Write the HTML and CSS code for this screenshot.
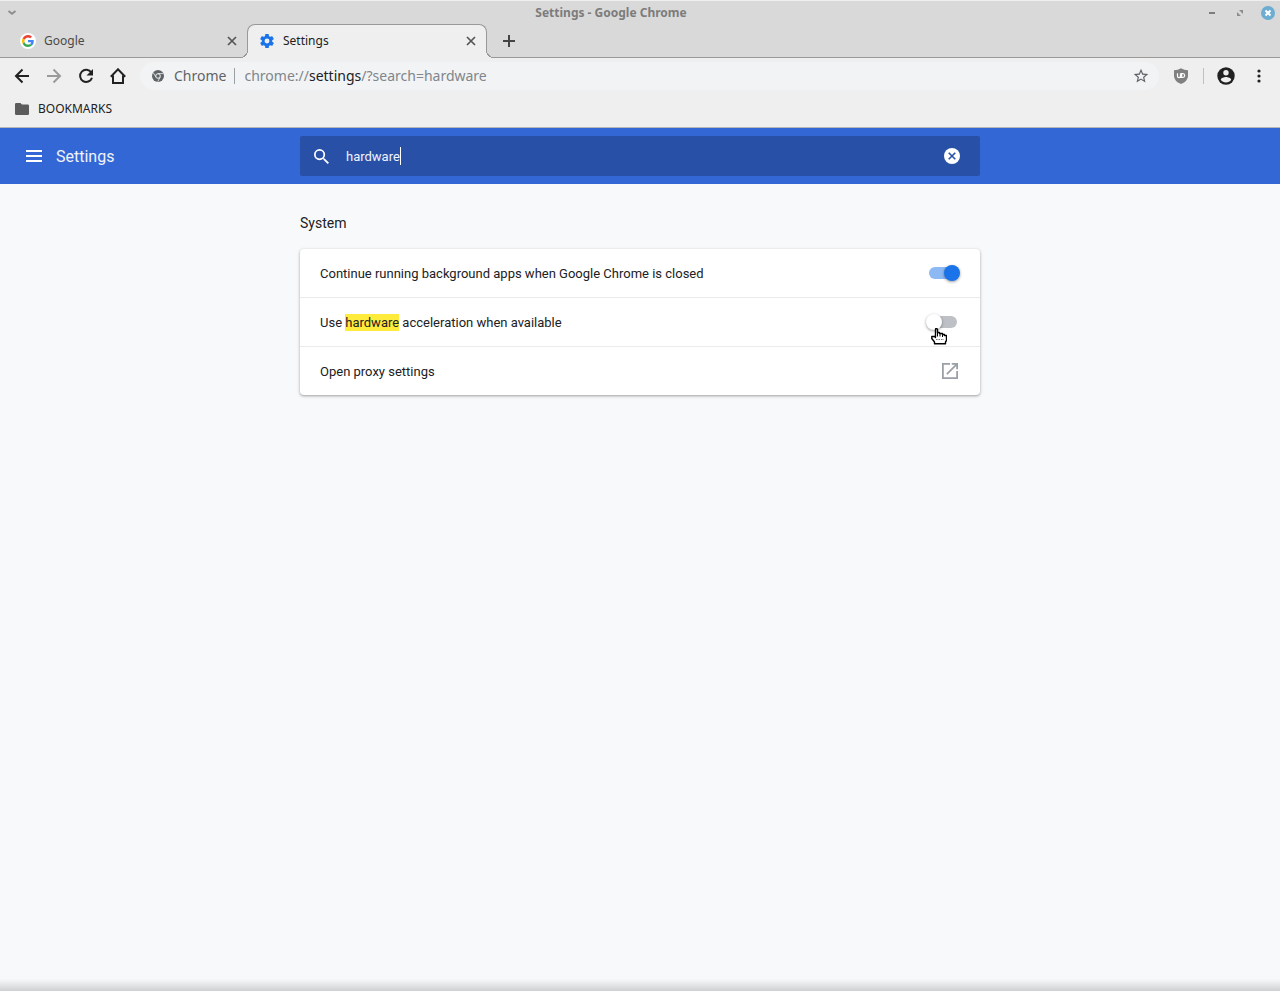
FILE: index.html
```
<!DOCTYPE html>
<html lang="en">
<head>
<meta charset="utf-8">
<title>Settings - Google Chrome</title>
<link rel="stylesheet" href="styles.css">
</head>
<body>
<div class="window">
  <header class="titlebar">
    <button class="win-btn" aria-label="Window menu"><svg width="10" height="10" viewBox="0 0 10 10"><path d="M1.500 3L5 5.800 8.500 3" fill="none" stroke="#8c8c8c" stroke-width="1.800"/></svg></button>
    <div class="window-title">Settings - Google Chrome</div>
    <div class="window-controls">
      <button class="win-btn" aria-label="Minimize"><svg width="14" height="14" viewBox="0 0 14 14"><path d="M4 7h6" stroke="#7d7d7d" stroke-width="2"/></svg></button>
      <button class="win-btn" aria-label="Restore"><svg width="14" height="14" viewBox="0 0 14 14"><path d="M6 4h4v4zM4 6v4h4z" fill="#8c8c8c"/></svg></button>
      <button class="win-btn" aria-label="Close"><svg width="14" height="14" viewBox="0 0 14 14"><circle cx="7" cy="7" r="7" fill="#6cadd1"/><path d="M4.500 4.500l5 5M9.500 4.500l-5 5" stroke="#fff" stroke-width="2"/></svg></button>
    </div>
  </header>

  <nav class="tabs" aria-label="Tabs">
    <div class="tab">
      <svg width="16" height="16" viewBox="0 0 16 16"><circle cx="8" cy="8" r="8" fill="#fff"/><g transform="translate(2 2) scale(.25)"><path fill="#EA4335" d="M24 9.500c3.540 0 6.710 1.220 9.210 3.600l6.850-6.850C35.900 2.380 30.470 0 24 0 14.620 0 6.510 5.380 2.560 13.220l7.980 6.190C12.430 13.720 17.740 9.500 24 9.500z"/><path fill="#4285F4" d="M46.980 24.550c0-1.570-.15-3.090-.38-4.550H24v9.020h12.940c-.58 2.960-2.260 5.480-4.780 7.180l7.730 6c4.510-4.180 7.090-10.360 7.090-17.650z"/><path fill="#FBBC05" d="M10.530 28.590c-.48-1.450-.76-2.990-.76-4.590s.27-3.140.76-4.590l-7.980-6.190C.92 16.460 0 20.120 0 24s.92 7.540 2.560 10.780z"/><path fill="#34A853" d="M24 48c6.480 0 11.930-2.130 15.890-5.810l-7.730-6c-2.150 1.450-4.920 2.300-8.160 2.300-6.260 0-11.570-4.220-13.470-9.910l-7.980 6.190C6.510 42.620 14.620 48 24 48z"/></g></svg>
      <a class="tab-title" href="#google">Google</a>
      <button class="tab-close" aria-label="Close Google tab"><svg width="10" height="10" viewBox="0 0 10 10"><path d="M1 1l8 8M9 1L1 9" stroke="#555" stroke-width="1.700"/></svg></button>
    </div>
    <div class="tab tab-active">
      <svg width="16" height="16" viewBox="0.500 0.500 23 23"><path fill="#1a73e8" d="M19.430 12.980c.04-.32.07-.64.07-.98s-.03-.66-.07-.98l2.110-1.650c.19-.15.24-.42.12-.64l-2-3.460c-.12-.22-.39-.3-.61-.22l-2.490 1c-.52-.4-1.080-.73-1.690-.98l-.38-2.650A.49.49 0 0 0 14 2h-4c-.25 0-.46.18-.49.42l-.38 2.650c-.61.25-1.170.59-1.690.98l-2.490-1c-.23-.09-.49 0-.61.22l-2 3.460c-.13.22-.07.49.12.64l2.110 1.650c-.04.32-.07.65-.07.98s.03.66.07.98l-2.110 1.650c-.19.15-.24.42-.12.64l2 3.460c.12.22.39.3.61.22l2.490-1c.52.4 1.080.73 1.690.98l.38 2.650c.03.24.24.42.49.42h4c.25 0 .46-.18.49-.42l.38-2.650c.61-.25 1.170-.59 1.690-.98l2.490 1c.23.09.49 0 .61-.22l2-3.460c.12-.22.07-.49-.12-.64zM12 15.500a3.500 3.500 0 1 1 0-7 3.500 3.500 0 0 1 0 7z"/></svg>
      <a class="tab-title" href="#settings" aria-current="page">Settings</a>
      <button class="tab-close" aria-label="Close Settings tab"><svg width="10" height="10" viewBox="0 0 10 10"><path d="M1 1l8 8M9 1L1 9" stroke="#555" stroke-width="1.700"/></svg></button>
    </div>
    <button class="new-tab" aria-label="New tab"><svg width="12" height="12" viewBox="0 0 12 12"><path d="M6 0v12M0 6h12" stroke="#444" stroke-width="2"/></svg></button>
  </nav>

  <div class="toolbar">
    <div class="nav-buttons">
      <button class="icon-btn" aria-label="Back"><svg width="16" height="16" viewBox="0 0 16 16"><path d="M15 8H2M8.500 1.500L2 8l6.500 6.500" fill="none" stroke="#212121" stroke-width="2"/></svg></button>
      <button class="icon-btn" aria-label="Forward" disabled><svg width="16" height="16" viewBox="0 0 16 16"><path d="M1 8h13M7.500 1.500L14 8l-6.500 6.500" fill="none" stroke="#9a9a9a" stroke-width="2"/></svg></button>
      <button class="icon-btn" aria-label="Reload"><svg width="16" height="16" viewBox="0 0 16 16"><path d="M13.300 4.500A6.100 6.100 0 1 0 14 9.700" fill="none" stroke="#212121" stroke-width="2"/><path d="M15 1v6.500H8.500z" fill="#212121"/></svg></button>
      <button class="icon-btn" aria-label="Home"><svg width="16" height="16" viewBox="0 0 16 16"><path d="M0.800 8.800L8 1.300l7.200 7.500M3 7.500V15h10V7.500" fill="none" stroke="#212121" stroke-width="2"/></svg></button>
    </div>
    <div class="omnibox">
      <svg class="site-icon" width="12" height="12" viewBox="0 0 12 12"><circle cx="6" cy="6" r="6" fill="#5f6368"/><circle cx="6" cy="6" r="2.300" fill="none" stroke="#f1f3f4"/><path d="M6 3.600h5.200M3.800 6.900L1.200 2.600M8.200 7.100L5.700 11.700" stroke="#f1f3f4" stroke-width=".8"/></svg>
      <span class="site-name">Chrome</span>
      <a class="url" href="#settings">chrome://<b>settings</b>/?search=hardware</a>
      <button class="star" aria-label="Bookmark this page"><svg width="16" height="16" viewBox="1 1 22 22"><path fill="#5f6368" d="M22 9.240l-7.190-.62L12 2 9.190 8.630 2 9.240l5.460 4.730L5.820 21 12 17.270 18.180 21l-1.630-7.030zM12 15.400l-3.760 2.270 1-4.280-3.320-2.880 4.380-.38L12 6.100l1.710 4.040 4.380.38-3.320 2.880 1 4.280z"/></svg></button>
    </div>
    <button class="icon-btn shield" aria-label="uBlock"><svg width="16" height="16" viewBox="0 0 16 16"><path d="M8 0.300Q11 2.200 15 2.200V8Q15 13 8 16Q1 13 1 8V2.200Q5 2.200 8 .3z" fill="#808080"/><path d="M4.500 5.200v3Q4.500 9.600 6 9.600t1.500-1.400v-3M8.700 5.500v4h1q2-.2 2-2t-2-2zM7.500 9.500h1.200" fill="none" stroke="#fff" stroke-width="1.200"/></svg></button>
    <span class="toolbar-divider"></span>
    <button class="icon-btn" aria-label="Profile"><svg width="18" height="18" viewBox="0 0 18 18"><circle cx="9" cy="9" r="8.700" fill="#212121"/><circle cx="9" cy="5.700" r="2.700" fill="#efefef"/><path d="M3.800 12.700C4 10.900 7.200 10 9 10s5 .9 5.200 2.700a6.200 6.200 0 0 1-10.400 0z" fill="#efefef"/></svg></button>
    <button class="icon-btn more" aria-label="More"><svg width="4" height="14" viewBox="0 0 4 14"><g fill="#212121"><circle cx="2" cy="2" r="1.600"/><circle cx="2" cy="7" r="1.600"/><circle cx="2" cy="12" r="1.600"/></g></svg></button>
  </div>

  <div class="bookmarks">
    <button class="bookmark"><svg width="14" height="12" viewBox="0 0 14 12"><path d="M1.200 0h4.300L7 1.500h5.800Q14 1.500 14 2.700v8Q14 12 12.800 12H1.200Q0 12 0 10.800V1.200Q0 0 1.200 0z" fill="#5c5c5c"/></svg>BOOKMARKS</button>
  </div>

  <header class="app-bar">
    <div class="brand">
      <button class="icon-btn" aria-label="Main menu"><svg width="16" height="12" viewBox="0 0 16 12"><path d="M0 1h16M0 6h16M0 11h16" stroke="#fff" stroke-width="2"/></svg></button>
      <h1 class="app-title">Settings</h1>
    </div>
    <div class="search">
      <svg width="15" height="15" viewBox="3 3 17.500 17.500"><path fill="#fff" d="M15.500 14h-.79l-.28-.27A6.470 6.470 0 0 0 16 9.500 6.500 6.500 0 1 0 9.500 16c1.610 0 3.090-.59 4.230-1.570l.27.28v.79l5 4.990L20.490 19zm-6 0a4.500 4.500 0 1 1 0-9 4.500 4.500 0 0 1 0 9z"/></svg>
      <input class="search-input" type="text" value="hardware" aria-label="Search settings">
      <span class="caret"></span>
      <button class="clear" aria-label="Clear search"><svg width="16" height="16" viewBox="0 0 17 17"><circle cx="8.500" cy="8.500" r="8.500" fill="#fff"/><path d="M5 5l7 7M12 5l-7 7" stroke="#2850a7" stroke-width="1.700"/></svg></button>
    </div>
  </header>

  <main class="content">
    <section class="section">
      <h2 class="section-title">System</h2>
      <div class="card">
        <div class="row">
          <label for="bg-apps">Continue running background apps when Google Chrome is closed</label>
          <input class="toggle" type="checkbox" id="bg-apps" checked>
        </div>
        <div class="row">
          <label for="hw-accel">Use <mark>hardware</mark> acceleration when available</label>
          <span class="pointed">
            <input class="toggle" type="checkbox" id="hw-accel">
            <svg class="pointer" width="16" height="17" viewBox="0 0 16 17"><path d="M4.500 9.500V1.500Q4.500.5 5.300.5T6.500 1.500V4.500H8.500V5.500H11.500V6.500H13.500V7.500H15.500V12.500L14.500 14V15.800H3.500V14L.8 10.500V8.500H3.500z" fill="#fff" stroke="#000" stroke-width="1.400" stroke-linejoin="round"/><path d="M6.500 4.500V8.500M9 5.500V8.500M11.500 6.500V9" stroke="#000" fill="none"/><path d="M5 11.500h8" stroke="#777" stroke-dasharray="1.500 1"/></svg>
          </span>
        </div>
        <div class="row">
          <a class="row-link" href="#proxy">Open proxy settings
            <svg width="16" height="16" viewBox="3 3 18 18"><path fill="#9aa0a6" d="M19 19H5V5h7V3H3v18h18v-9h-2zM14 3v2h3.590l-9.830 9.830 1.410 1.410L19 6.410V10h2V3z"/></svg>
          </a>
        </div>
      </div>
    </section>
  </main>
</div>
</body>
</html>
```

FILE: styles.css
```
* { box-sizing: border-box; }

body {
  margin: 0;
  font-family: Roboto, sans-serif;
  font-size: 13px;
  color: #202124;
}

button {
  display: flex;
  align-items: center;
  justify-content: center;
  padding: 0;
  border: 0;
  background: none;
  font: inherit;
  color: inherit;
}

a { color: inherit; text-decoration: none; }
svg { display: block; flex: none; }

.window {
  display: flex;
  flex-direction: column;
  min-height: 100vh;
  background: #f8f9fb;
}

.titlebar,
.tabs,
.toolbar,
.bookmarks { font-family: "Noto Sans", sans-serif; }

/* Title bar */
.titlebar {
  display: flex;
  align-items: center;
  height: 24px;
  padding: 0 5px 0 7px;
  border-top: 1px solid #efefef;
  background: #d9d9d9;
}
.window-title {
  flex: 1;
  font-size: 12px;
  font-weight: 700;
  text-align: center;
  color: #7c7c7c;
}
.window-controls { display: flex; gap: 14px; }

/* Tab strip */
.tabs {
  display: flex;
  height: 34px;
  padding-left: 8px;
  border-bottom: 1px solid #999;
  background: #d9d9d9;
}
.tab {
  position: relative;
  display: flex;
  align-items: center;
  gap: 8px;
  width: 239px;
  padding: 0 10px 0 12px;
  font-size: 12px;
  color: #4a4a4a;
}
.tab-active {
  width: 240px;
  height: 34px;
  padding: 0 10px 2px 11px;
  border: 1px solid #999;
  border-bottom: 0;
  border-radius: 8px 8px 0 0;
  background: #efefef;
  color: #212121;
}
.tab-active::before,
.tab-active::after {
  content: "";
  position: absolute;
  bottom: 0;
  width: 8px;
  height: 8px;
}
.tab-active::before {
  left: -8px;
  background: radial-gradient(circle at 0 0, #d9d9d9 7px, #999 7px, #999 8px, #efefef 8px);
}
.tab-active::after {
  right: -8px;
  background: radial-gradient(circle at 100% 0, #d9d9d9 7px, #999 7px, #999 8px, #efefef 8px);
}
.tab-title { flex: 1; }
.new-tab { width: 44px; }

/* Toolbar */
.toolbar {
  display: flex;
  align-items: center;
  height: 36px;
  padding: 0 11px 0 14px;
  background: #efefef;
}
.nav-buttons { display: flex; gap: 16px; margin-right: 14px; }
.omnibox {
  flex: 1;
  display: flex;
  align-items: center;
  height: 28px;
  padding: 0 10px 0 12px;
  border-radius: 14px;
  background: #f1f3f4;
  font-size: 14px;
  color: #5f6368;
}
.site-name {
  margin: 0 9px 0 10px;
  padding-right: 8px;
  border-right: 1px solid #9aa0a6;
  line-height: 16px;
}
.url { flex: 1; line-height: 16px; color: #80868b; }
.url b { font-weight: 400; color: #202124; }
.shield { margin-left: 14px; }
.toolbar-divider {
  width: 1px;
  height: 16px;
  margin: 0 13px 0 14px;
  background: #c0c0c0;
}
.more { width: 20px; margin-left: 14px; }

.bookmarks {
  display: flex;
  height: 34px;
  padding: 0 15px 4px;
  border-bottom: 1px solid #b6b6b6;
  background: #efefef;
  font-size: 12px;
  color: #212121;
}
.bookmark { gap: 9px; }

/* Settings header */
.app-bar {
  display: grid;
  grid-template-columns: 1fr minmax(auto, 680px) 1fr;
  align-items: center;
  height: 56px;
  background: #3367d6;
  color: #fff;
}
.brand { display: flex; align-items: center; gap: 14px; padding-left: 26px; }
.app-title {
  margin: 0;
  padding-top: 2px;
  font-size: 16px;
  font-weight: 400;
  line-height: 18px;
  color: #f0f3fb;
}
.search {
  display: flex;
  align-items: center;
  height: 40px;
  padding: 0 20px 0 14px;
  border-radius: 2px;
  background: #2850a7;
}
.search-input {
  field-sizing: content;
  margin-left: 17px;
  padding: 0;
  border: 0;
  outline: 0;
  background: none;
  font: inherit;
  color: #f0f3fb;
}
.caret { width: 1px; height: 18px; background: #fff; }
.clear { margin-left: auto; }

/* Settings content */
.content {
  flex: 1;
  display: flex;
  justify-content: center;
  background: linear-gradient(to top, #cfd0d1, #f8f9fb 12px);
}
.section { width: 680px; }
.section-title {
  margin: 0;
  padding: 30px 0 17px;
  font-size: 14px;
  font-weight: 400;
  line-height: 18px;
}
.card {
  border-radius: 4px;
  background: #fff;
  box-shadow: 0 1px 2px rgba(60, 64, 67, .3), 0 1px 3px 1px rgba(60, 64, 67, .15);
}
.row {
  display: flex;
  align-items: center;
  justify-content: space-between;
  min-height: 48px;
  padding: 0 20px;
}
.row + .row { min-height: 49px; border-top: 1px solid #ebebeb; }
.row-link {
  flex: 1;
  display: flex;
  align-items: center;
  justify-content: space-between;
  padding-right: 2px;
}
mark { background: #ffeb3b; color: inherit; padding: 1px 0; }

.toggle {
  appearance: none;
  display: flex;
  align-items: center;
  width: 28px;
  height: 12px;
  margin: 0 3px 0 0;
  border-radius: 6px;
  background: #bdc1c6;
}
.toggle::before {
  content: "";
  flex: none;
  width: 16px;
  height: 16px;
  margin-left: -3px;
  border-radius: 50%;
  background: #fff;
  box-shadow: 0 1px 3px rgba(0, 0, 0, .4);
}
.toggle:checked { background: #8cb9f3; }
.toggle:checked::before { margin-left: 15px; background: #1a73e8; }

.pointed { position: relative; }
.pointer { position: absolute; left: 2px; top: 12px; }
```
